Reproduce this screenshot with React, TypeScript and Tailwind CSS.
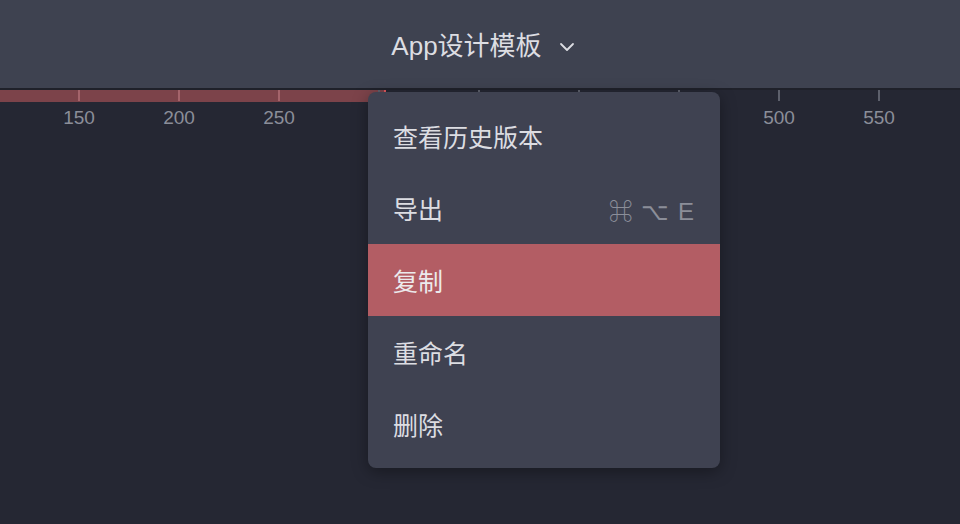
import React from "react";

const ticks = [150, 200, 250, 300, 350, 400, 450, 500, 550];

const items = [
  { label: "查看历史版本" },
  { label: "导出", shortcut: "⌘ ⌥ E" },
  { label: "复制", active: true },
  { label: "重命名" },
  { label: "删除" },
];

function Chevron() {
  return (
    <svg width="16" height="10" viewBox="0 0 16 10" fill="none" className="ml-[17px] mt-[2px]">
      <path d="M2 2l6 6 6-6" stroke="#dcdde2" strokeWidth="1.8" strokeLinecap="round" strokeLinejoin="round" />
    </svg>
  );
}

export default function App() {
  return (
    <div
      className="relative h-[524px] w-[960px] overflow-hidden bg-[#252733]"
      style={{ fontFamily: '"Liberation Sans", "Noto Sans CJK SC", sans-serif' }}
    >
      {/* 顶部标题栏 */}
      <header className="flex h-[88px] items-center justify-center bg-[#3e4250]">
        <div className="flex items-center pl-[6px] pt-[4px] text-[26px] text-[#dcdde2]">
          <span>App设计模板</span>
          <Chevron />
        </div>
      </header>
      <div className="h-[2px] bg-[#1f212a]" />

      {/* 标尺 */}
      <div className="relative h-[34px]">
        <div className="absolute left-0 top-0 h-[12px] w-[386px] bg-[#7c434a]">
          <div className="absolute right-0 top-0 h-full w-[2px] bg-[#e05a5f]" />
        </div>
        <div className="relative flex pl-[29px]">
          {ticks.map((t) => (
            <div key={t} className="flex w-[100px] flex-col items-center">
              <div className={t < 300 ? "h-[11px] w-[2px] bg-[#a4646b]" : "h-[11px] w-[2px] bg-[#5d606c]"} />
              <span
                className={
                  t >= 300 && t <= 450
                    ? "invisible mt-[6px] text-[19px] leading-[22px] text-[#8b8e99]"
                    : "mt-[6px] text-[19px] leading-[22px] text-[#8b8e99]"
                }
              >
                {t}
              </span>
            </div>
          ))}
        </div>
      </div>

      {/* 下拉菜单 */}
      <div className="absolute left-[368px] top-[92px] w-[352px] rounded-[8px] bg-[#3f4251] py-[8px] shadow-[0_4px_16px_rgba(0,0,0,0.35)]">
        {items.map((item) => (
          <div
            key={item.label}
            className={
              item.active
                ? "flex h-[72px] items-center justify-between bg-[#b35d64] pl-[25px] pr-[25px] pt-[5px] text-[25px] text-[#eceaec]"
                : "flex h-[72px] items-center justify-between pl-[25px] pr-[25px] pt-[5px] text-[25px] text-[#dcdde2]"
            }
          >
            <span>{item.label}</span>
            {item.shortcut && (
              <span className="pt-[3px] text-[24px] tracking-[1px] text-[#8b8e99]">{item.shortcut}</span>
            )}
          </div>
        ))}
      </div>
    </div>
  );
}
